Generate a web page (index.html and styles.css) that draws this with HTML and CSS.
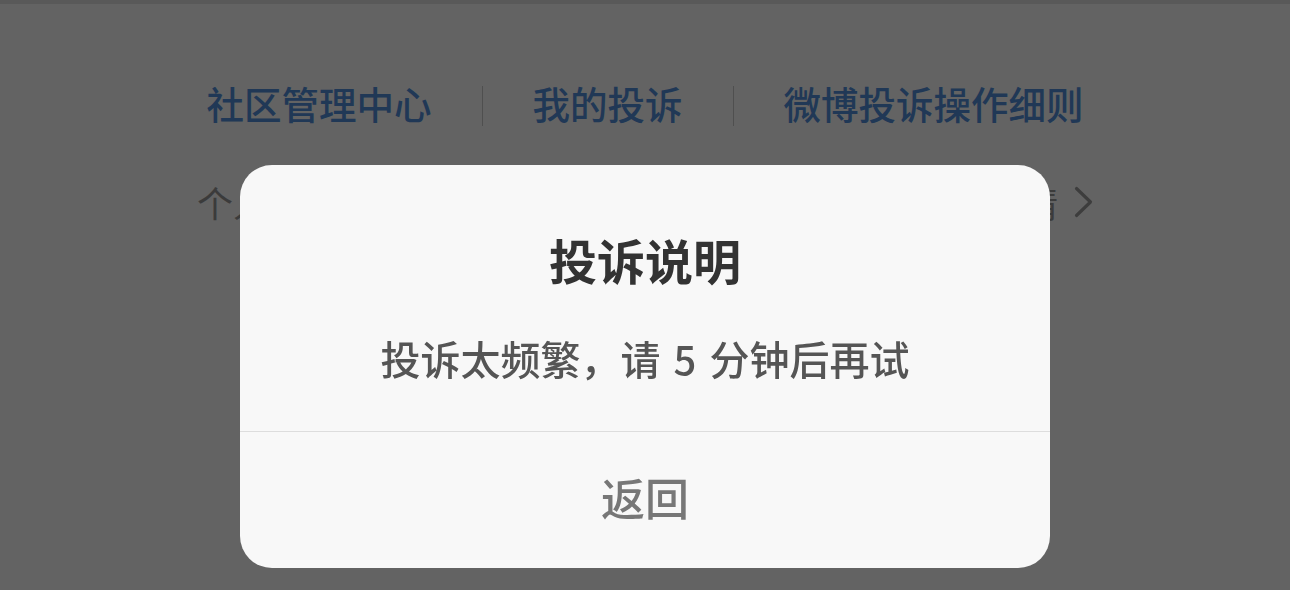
FILE: index.html
```html
<!DOCTYPE html>
<html lang="zh-CN">
<head>
<meta charset="utf-8">
<title>投诉说明</title>
<link rel="stylesheet" href="styles.css">
</head>
<body>
<div class="page">
  <nav class="tabs">
    <a class="tab">社区管理中心</a>
    <span class="sep"></span>
    <a class="tab">我的投诉</a>
    <span class="sep"></span>
    <a class="tab">微博投诉操作细则</a>
  </nav>
  <div class="row">
    <span class="row-label">个人投诉记录</span>
    <span class="row-more">查看详情
      <svg class="chev" width="19" height="32" viewBox="0 0 19 32"><polyline points="2.5,2.5 16.5,16 2.5,29.5" fill="none" stroke="currentColor" stroke-width="3.2" stroke-linecap="round" stroke-linejoin="round"/></svg>
    </span>
  </div>
</div>
<div class="mask">
  <div class="dialog">
    <div class="dialog-body">
      <h2 class="dialog-title">投诉说明</h2>
      <p class="dialog-msg">投诉太频繁，请 5 分钟后再试</p>
    </div>
    <div class="dialog-foot">
      <button class="dialog-btn">返回</button>
    </div>
  </div>
</div>
</body>
</html>
```
FILE: styles.css
```css
html, body {
  margin: 0;
  padding: 0;
  height: 100%;
}
body {
  background: #ffffff;
  font-family: "Noto Sans CJK SC", "Noto Sans", sans-serif;
  overflow: hidden;
}
.page {
  border-top: 4px solid #e5e5e5;
}
.tabs {
  display: flex;
  justify-content: center;
  align-items: flex-start;
  padding-top: 74px;
}
.tab {
  font-size: 37.5px;
  line-height: 50px;
  font-weight: 500;
  color: #5490dd;
  text-decoration: none;
  white-space: nowrap;
}
.sep {
  width: 1px;
  height: 40px;
  margin: 8px 50px 0;
  background: #cccccc;
}
.row {
  width: 896px;
  margin: 49px auto 0;
  display: flex;
  justify-content: space-between;
  align-items: center;
  font-size: 36px;
  line-height: 50px;
  color: #999999;
}
.row-more {
  display: flex;
  align-items: center;
  gap: 16px;
}
.chev {
  display: block;
  color: #9e9e9e;
}
.mask {
  position: fixed;
  inset: 0;
  background: rgba(0, 0, 0, 0.612);
  display: flex;
  justify-content: center;
  align-items: flex-start;
  padding-top: 165px;
}
.dialog {
  width: 810px;
  background: #f8f8f8;
  border-radius: 32px;
  overflow: hidden;
}
.dialog-body {
  padding: 66px 40px 49px;
  text-align: center;
  border-bottom: 1px solid #dddddd;
}
.dialog-title {
  margin: 0;
  font-size: 48px;
  line-height: 56px;
  font-weight: 700;
  color: #333333;
}
.dialog-msg {
  margin: 47px 0 0;
  font-size: 40px;
  line-height: 48px;
  font-weight: 500;
  word-spacing: 4px;
  color: #555555;
}
.dialog-foot {
  display: flex;
  justify-content: center;
  padding: 37px 0 43px;
}
.dialog-btn {
  border: 0;
  background: none;
  padding: 0;
  font-family: inherit;
  font-size: 44px;
  line-height: 56px;
  font-weight: 500;
  color: #777777;
}
```
